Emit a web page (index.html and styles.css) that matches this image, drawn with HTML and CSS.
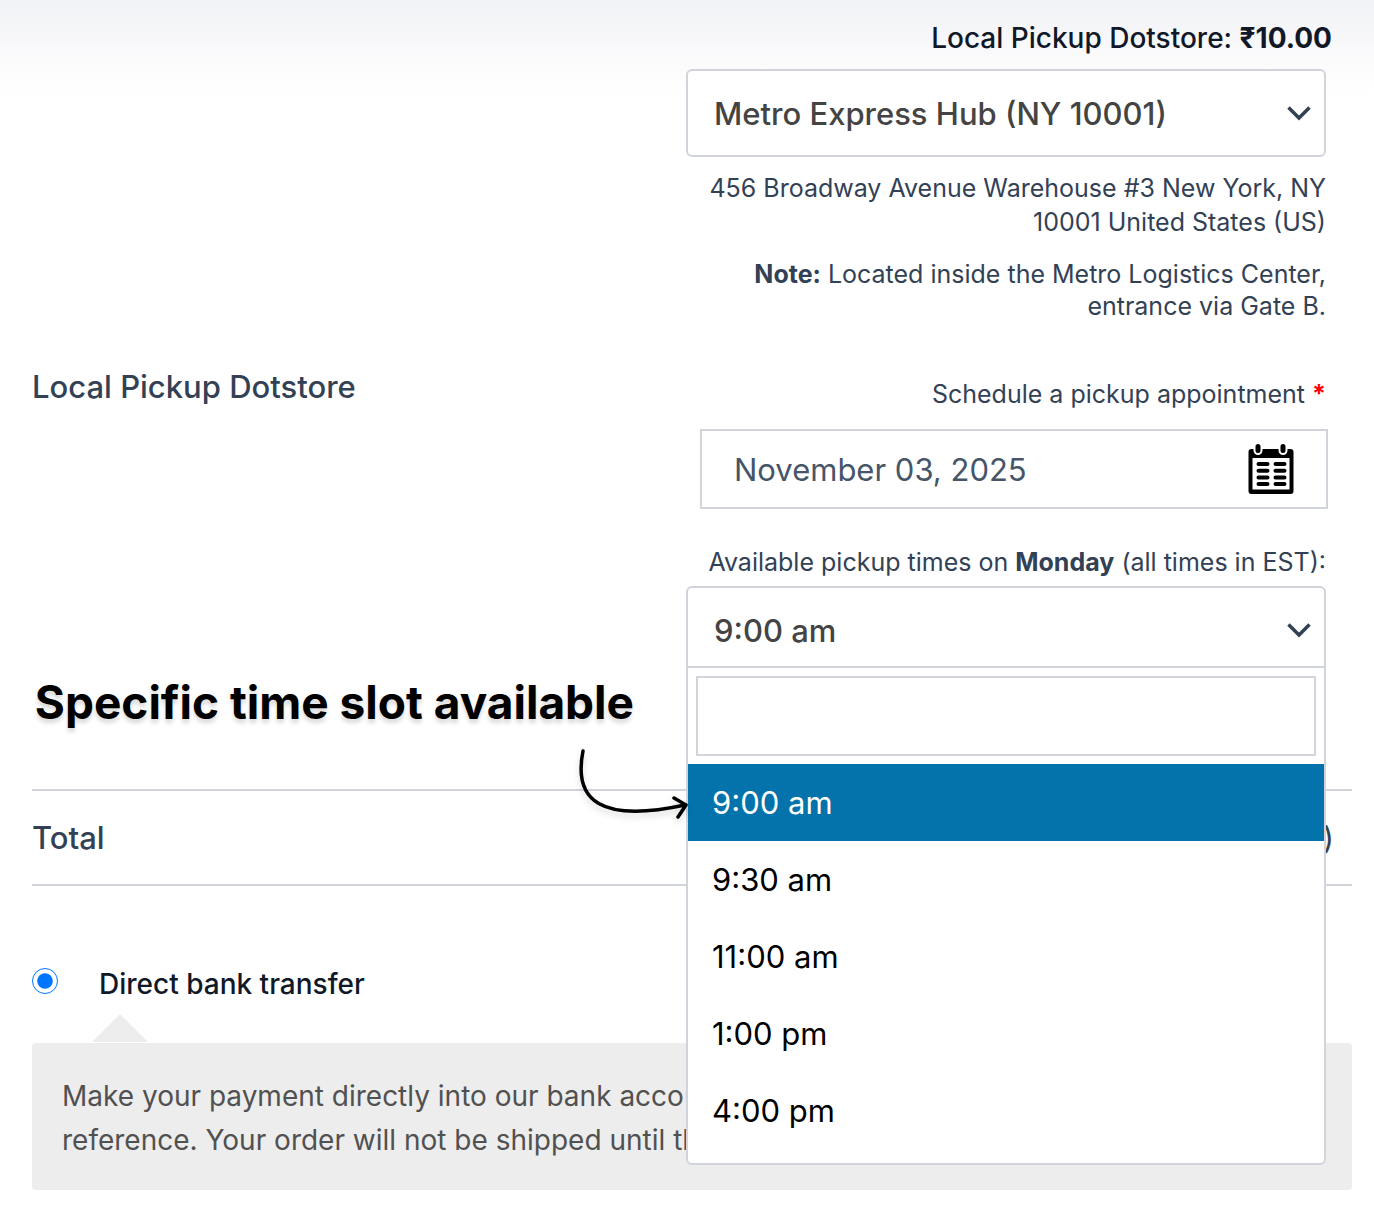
FILE: index.html
```html
<!DOCTYPE html>
<html lang="en">
<head>
<meta charset="utf-8">
<meta name="viewport" content="width=device-width, initial-scale=1">
<title>Checkout</title>
<link rel="stylesheet" href="styles.css">
</head>
<body>
<main class="checkout">
  <table class="order">
    <tbody>
      <tr class="order-row shipping">
        <th scope="row" class="order-label">Local Pickup Dotstore</th>
        <td class="order-value">
          <p class="method">Local Pickup Dotstore: <strong>₹10.00</strong></p>
          <div class="pickup">
            <div class="select-wrap">
              <select class="select" aria-label="Pickup location">
                <option>Metro Express Hub (NY 10001)</option>
              </select>
              <svg class="chevron" viewBox="0 0 24 16" aria-hidden="true"><path d="M1.500 2.500 12 13 22.500 2.500"/></svg>
            </div>
            <p class="address">456 Broadway Avenue Warehouse #3 New York, NY 10001 United States (US)</p>
            <p class="note"><strong>Note:</strong> Located inside the Metro Logistics Center, entrance via Gate B.</p>
            <label class="date-label" for="date">Schedule a pickup appointment <span class="required">*</span></label>
            <div class="date-field">
              <input class="date-input" id="date" type="text" value="November 03, 2025">
              <svg class="calendar" viewBox="0 0 46 50" aria-hidden="true">
                <rect x="0.500" y="5" width="45" height="45" rx="3"/>
                <rect class="paper" x="4.500" y="14" width="37" height="31.500"/>
                <rect class="ring" x="6.500" y="-1" width="7" height="11" rx="3.500"/>
                <rect class="ring" x="31.500" y="-1" width="7" height="11" rx="3.500"/>
                <path class="lines" d="M10.500 20h9M27.500 20h9M10.500 26.700h9M27.500 26.700h9M10.500 33.400h9M27.500 33.400h9M10.500 40.100h9M27.500 40.100h9"/>
              </svg>
            </div>
            <label class="time-label" for="time">Available pickup times on <strong>Monday</strong> (all times in EST):</label>
            <div class="select-wrap">
              <select class="select" id="time">
                <option>9:00 am</option>
              </select>
              <svg class="chevron" viewBox="0 0 24 16" aria-hidden="true"><path d="M1.500 2.500 12 13 22.500 2.500"/></svg>
              <div class="dropdown">
                <div class="search"><input class="search-input" type="text" aria-label="Search times"></div>
                <ul class="options" role="listbox" aria-label="Pickup times">
                  <li class="option active" role="option" aria-selected="true">9:00 am</li>
                  <li class="option" role="option">9:30 am</li>
                  <li class="option" role="option">11:00 am</li>
                  <li class="option" role="option">1:00 pm</li>
                  <li class="option" role="option">4:00 pm</li>
                </ul>
              </div>
              <div class="callout">
                <strong class="callout-text">Specific time slot available</strong>
                <svg class="callout-arrow" viewBox="0 0 112 74" aria-hidden="true"><path d="M6 4C-4 54 24 76 108 58M97 51 109 58 101 70"/></svg>
              </div>
            </div>
          </div>
        </td>
      </tr>
      <tr class="order-row">
        <th scope="row" class="order-label">Total</th>
        <td class="order-value total">)</td>
      </tr>
    </tbody>
  </table>
  <section class="payment">
    <label class="payment-method"><input class="radio" type="radio" name="payment" checked> Direct bank transfer</label>
    <p class="payment-box">Make your payment directly into our bank account. Please use your Order ID as the payment reference. Your order will not be shipped until the funds have cleared in our account.</p>
  </section>
</main>
</body>
</html>
```
FILE: styles.css
```css
* { box-sizing: border-box; }

body {
  margin: 0;
  background: #fff linear-gradient(#f1f2f6, #fbfbfc 64px, #fff 96px) no-repeat;
  color: #334155;
  font-family: Inter, "Liberation Sans", sans-serif;
  font-size: 25px;
  line-height: 32px;
}

p, ul { margin: 0; padding: 0; }
strong { font-weight: 700; }

.checkout { padding: 0 22px 20px 32px; }

.order { width: 100%; border-collapse: separate; border-spacing: 0; }
.order-label, .order-value { padding: 0; border-bottom: 2px solid #d1d5db; }
.order-label {
  font-size: 31px;
  font-weight: 500;
  line-height: 93px;
  text-align: left;
}
.order-value { width: 666px; text-align: right; }
.total { padding-right: 18px; font-size: 31px; }

.shipping .order-label { padding-bottom: 16px; }
.shipping .order-value { padding: 20px 20px 115px 0; }

.method {
  color: #111827;
  font-size: 28px;
  font-weight: 500;
  line-height: 36px;
}

.pickup {
  display: flex;
  flex-direction: column;
  padding: 13px 6px 0 0;
}

.select-wrap { position: relative; }
.select {
  display: block;
  width: 100%;
  height: 88px;
  padding: 2px 60px 0 26px;
  border: 2px solid #d1d5db;
  border-radius: 6px;
  background: #fff;
  color: #444;
  font: 500 31px/48px Inter, "Liberation Sans", sans-serif;
  appearance: none;
}
.chevron {
  position: absolute;
  top: 36px;
  right: 15px;
  width: 24px;
  height: 16px;
  fill: none;
  stroke: #334155;
  stroke-width: 3.5;
  pointer-events: none;
}

.address { margin-top: 14px; line-height: 34px; }
.note { margin: 19px 0 56px; }
.required { color: #f00; font-weight: 700; }

.date-field {
  display: flex;
  align-items: center;
  margin: 19px -2px 37px 14px;
  height: 80px;
  padding: 0 32px;
  border: 2px solid #d1d5db;
  background: #fff;
}
.date-input {
  flex: 1;
  min-width: 0;
  padding: 2px 0 0;
  border: 0;
  background: none;
  color: #475569;
  font: 400 31px/48px Inter, "Liberation Sans", sans-serif;
}
.calendar { width: 46px; height: 50px; overflow: visible; }
.paper { fill: #fff; }
.ring { stroke: #fff; stroke-width: 2; }
.lines { stroke: #000; stroke-width: 4; stroke-linecap: round; }

.time-label { margin-bottom: 8px; white-space: nowrap; }

.dropdown {
  position: absolute;
  z-index: 1;
  top: 80px;
  left: 0;
  right: 0;
  padding-bottom: 14px;
  border: 2px solid #d1d5db;
  border-radius: 0 0 6px 6px;
  background: #fff;
  text-align: left;
}
.search { padding: 8px; }
.search-input {
  display: block;
  width: 100%;
  height: 80px;
  border: 2px solid #d1d5db;
  background: #fff;
  font: inherit;
}
.options { list-style: none; }
.option {
  padding: 16px 24px;
  color: #000;
  font-size: 31px;
  line-height: 45px;
}
.active { background: #0472ab; color: #fff; }

/* Callout pointing at the highlighted slot from the left of the menu */
.callout {
  position: absolute;
  z-index: 2;
  top: 88px;
  right: 100%;
  display: flex;
  flex-direction: column;
  align-items: flex-end;
  color: #000;
  white-space: nowrap;
}
.callout-text {
  margin-right: 52px;
  font-size: 46px;
  line-height: 56px;
  text-shadow: 0 4px 4px rgba(0, 0, 0, 0.15);
}
.callout-arrow {
  width: 112px;
  height: 74px;
  margin: 17px -3px 0 0;
  fill: none;
  stroke: #000;
  stroke-width: 3.5;
  stroke-linecap: round;
  stroke-linejoin: round;
  filter: drop-shadow(0 4px 3px rgba(0, 0, 0, 0.15));
}

.payment { padding-top: 80px; }
.payment-method {
  display: flex;
  align-items: center;
  gap: 41px;
  color: #111827;
  font-size: 28px;
  font-weight: 500;
  line-height: 36px;
}
.radio { width: 26px; height: 26px; margin: 0 0 6px; accent-color: #0075ff; }
.payment-box {
  position: relative;
  margin-top: 41px;
  padding: 31px 30px 28px;
  border-radius: 4px;
  background: #ededed;
  color: #515151;
  font-size: 28px;
  line-height: 44px;
}
.payment-box::before {
  content: "";
  position: absolute;
  bottom: calc(100% + 1px);
  left: 60px;
  border: 28px solid transparent;
  border-top: 0;
  border-bottom-color: #ededed;
}
```
